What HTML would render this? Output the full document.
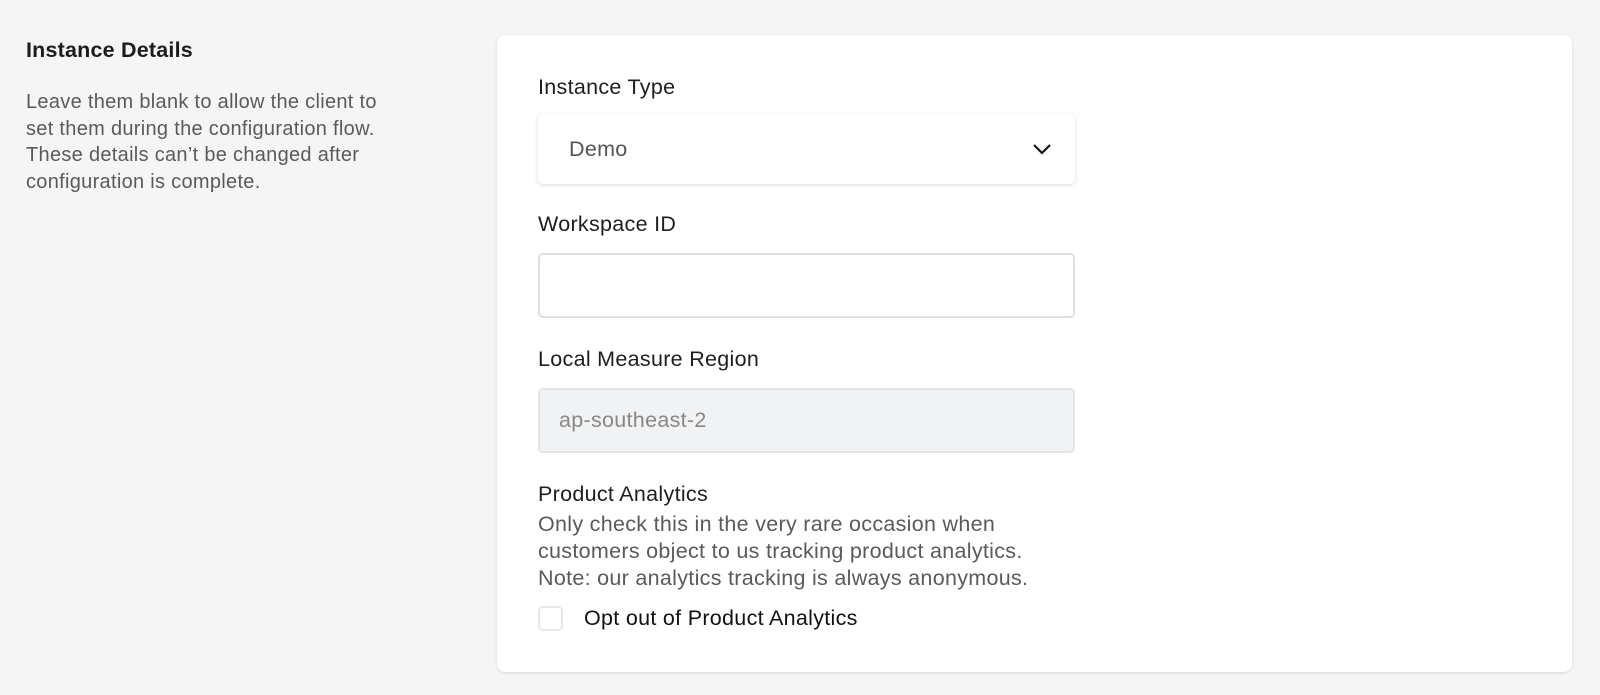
<!DOCTYPE html>
<html><head><style>
body{margin:0;width:1600px;height:695px;background:#f4f5f4;font-family:"Liberation Sans",sans-serif;position:relative;overflow:hidden}
.a{position:absolute;white-space:nowrap}
h2{position:absolute;left:26px;top:36px;margin:0;font-size:21.5px;line-height:28px;font-weight:bold;color:#1c1c1c;letter-spacing:.2px}
.desc{position:absolute;left:26px;top:89px;font-size:20px;line-height:26.6px;color:#5a5a5a;letter-spacing:.3px;white-space:nowrap}
.card{position:absolute;left:497px;top:35px;width:1075px;height:637px;background:#fff;border-radius:8px;box-shadow:0 1px 3px rgba(0,0,0,.12)}
.lbl{font-size:21.5px;line-height:28px;color:#1e1e1e;letter-spacing:.3px}
.box{position:absolute;left:538px;width:537px;box-sizing:border-box;border-radius:5px}
</style></head><body>
<h2>Instance Details</h2>
<div class="desc">Leave them blank to allow the client to<br>set them during the configuration flow.<br>These details can’t be changed after<br>configuration is complete.</div>
<div class="card"></div>
<div class="a lbl" style="left:538px;top:73px">Instance Type</div>
<div class="box" style="top:114px;height:70px;background:#fff;box-shadow:0 1px 4px rgba(0,0,0,.15)"></div>
<div class="a lbl" style="left:569px;top:135px;color:#555">Demo</div>
<svg class="a" style="left:1032px;top:142px" width="20" height="14" viewBox="0 0 20 14"><path d="M2 3l8 8 8-8" fill="none" stroke="#111" stroke-width="2.2"/></svg>
<div class="a lbl" style="left:538px;top:210px">Workspace ID</div>
<div class="box" style="top:253px;height:65px;border:2px solid #e0e0e0;background:#fff"></div>
<div class="a lbl" style="left:538px;top:345px">Local Measure Region</div>
<div class="box" style="top:388px;height:65px;border:2px solid #e2e4e5;background:#f0f2f3"></div>
<div class="a lbl" style="left:559px;top:406px;color:#888">ap-southeast-2</div>
<div class="a lbl" style="left:538px;top:480px">Product Analytics</div>
<div class="a lbl" style="left:538px;top:511px;line-height:26.8px;color:#5a5a5a">Only check this in the very rare occasion when<br>customers object to us tracking product analytics.<br>Note: our analytics tracking is always anonymous.</div>
<div class="a" style="left:538px;top:606px;width:25px;height:25px;box-sizing:border-box;border:2px solid #e8e8e8;border-radius:5px;background:#fff"></div>
<div class="a lbl" style="left:584px;top:604px;color:#111">Opt out of Product Analytics</div>
</body></html>
